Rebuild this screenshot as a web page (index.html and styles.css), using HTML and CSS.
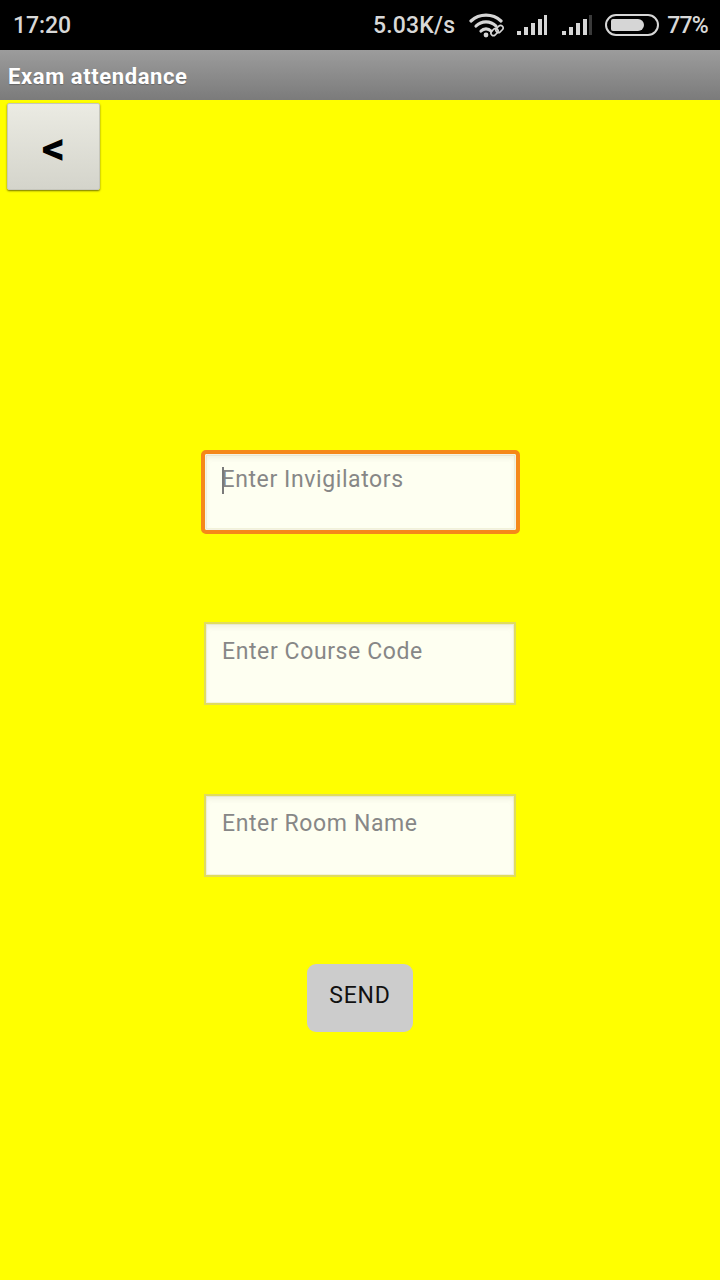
FILE: index.html
```html
<!DOCTYPE html>
<html>
<head>
<meta charset="utf-8">
<link rel="stylesheet" href="styles.css">
</head>
<body>
<div class="status">
  <span class="time">17:20</span>
  <div class="status-right">
    <span class="speed">5.03K/s</span>
    <svg class="wifi" width="36" height="26" viewBox="0 0 36 26">
      <path d="M2 9 A22 22 0 0 1 32 9" fill="none" stroke="#d6d6d6" stroke-width="3.2" stroke-linecap="round"/>
      <path d="M7 14 A14 14 0 0 1 27 14" fill="none" stroke="#d6d6d6" stroke-width="3.2" stroke-linecap="round"/>
      <path d="M12 19 A7 7 0 0 1 22 19" fill="none" stroke="#d6d6d6" stroke-width="3.2" stroke-linecap="round"/>
      <circle cx="17" cy="23" r="2.4" fill="#d6d6d6"/>
      <rect x="23" y="16" width="5" height="8" rx="2.5" transform="rotate(45 25.5 20)" fill="none" stroke="#d6d6d6" stroke-width="1.6"/>
      <rect x="28" y="13" width="5" height="8" rx="2.5" transform="rotate(45 30.5 17)" fill="none" stroke="#d6d6d6" stroke-width="1.6"/>
    </svg>
    <svg class="sig sig1" width="32" height="22" viewBox="0 0 32 22">
      <rect x="1" y="17" width="4" height="4" fill="#d6d6d6"/>
      <rect x="8" y="13" width="4" height="8" fill="#d6d6d6"/>
      <rect x="15" y="9" width="4" height="12" fill="#d6d6d6"/>
      <rect x="22" y="5" width="4" height="16" fill="#d6d6d6"/>
      <rect x="28" y="1" width="3" height="20" fill="#d6d6d6"/>
    </svg>
    <svg class="sig" width="32" height="22" viewBox="0 0 32 22">
      <rect x="1" y="17" width="4" height="4" fill="#d6d6d6"/>
      <rect x="8" y="13" width="4" height="8" fill="#d6d6d6"/>
      <rect x="15" y="9" width="4" height="12" fill="#d6d6d6"/>
      <rect x="22" y="5" width="4" height="16" fill="#d6d6d6"/>
      <rect x="28" y="1" width="3" height="20" fill="#3a3a3a"/>
    </svg>
    <div class="battery"><div class="battery-fill"></div></div>
    <span class="pct">77%</span>
  </div>
</div>
<div class="titlebar">Exam attendance</div>
<div class="content">
  <div class="back">&lt;</div>
  <div class="form">
    <div class="field focused"><span class="caret"></span><span class="ph">Enter Invigilators</span></div>
    <div class="field"><span class="ph">Enter Course Code</span></div>
    <div class="field"><span class="ph">Enter Room Name</span></div>
    <div class="send">SEND</div>
  </div>
</div>
</body>
</html>
```
FILE: styles.css
```css
html, body {
  margin: 0;
  padding: 0;
}
body {
  width: 720px;
  height: 1280px;
  background: #ffff00;
  font-family: Roboto, "Liberation Sans", sans-serif;
  overflow: hidden;
}
.status {
  height: 50px;
  background: #000;
  display: flex;
  align-items: center;
  justify-content: space-between;
  padding: 0 12px 0 13px;
  color: #d8d8d8;
  font-size: 23px;
  font-weight: 500;
}
.time {
  letter-spacing: -0.1px;
}
.status-right {
  display: flex;
  align-items: center;
}
.speed {
  margin-right: 14px;
  letter-spacing: 0.2px;
}
.wifi {
  margin-right: 11px;
}
.sig {
  margin-right: 12px;
}
.sig1 {
  margin-right: 13px;
}
.battery {
  height: 18px;
  border: 2px solid #d6d6d6;
  border-radius: 11px;
  margin-right: 8px;
  display: flex;
  align-items: center;
  padding: 0 4px;
  box-sizing: content-box;
  width: 42px;
}
.battery-fill {
  width: 33px;
  height: 12px;
  background: #d6d6d6;
  border-radius: 2px 6px 6px 2px;
}
.pct {
  letter-spacing: -0.8px;
}
.titlebar {
  height: 50px;
  background: linear-gradient(#9c9c9c, #7b7b7b);
  color: #fff;
  font-size: 22px;
  font-weight: 700;
  letter-spacing: 0.6px;
  display: flex;
  align-items: center;
  padding-left: 8px;
  padding-top: 2px;
  box-sizing: border-box;
  text-shadow: 0 1px 1px rgba(0,0,0,0.25);
}
.content {
  display: flex;
  flex-direction: column;
}
.back {
  margin: 3px 0 0 7px;
  width: 93px;
  height: 87px;
  box-sizing: border-box;
  background: linear-gradient(#ebebe3, #d4d4cb);
  border: 1px solid #c6c6bc;
  border-radius: 2px;
  box-shadow: 0 1px 2px rgba(0,0,0,0.55);
  display: flex;
  align-items: center;
  justify-content: center;
  font-size: 46px;
  font-weight: 700;
  color: #000;
  font-family: Roboto, "Liberation Sans", sans-serif;
  padding-top: 2px;
  line-height: 1;
}
.form {
  margin-top: 261px;
  display: flex;
  flex-direction: column;
  align-items: center;
}
.field {
  width: 312px;
  height: 83px;
  box-sizing: border-box;
  background: #fefff1;
  border: 2px solid #e0dc5e;
  box-shadow: inset 0 3px 5px rgba(120,120,80,0.10), inset 0 0 0 1px #f4f4dc;
  padding: 14px 0 0 16px;
  display: flex;
  align-items: flex-start;
  position: relative;
  margin-bottom: 89px;
}
.field.focused {
  border: 1px solid #f3f1e4;
  outline: 4px solid #f5881a;
  outline-offset: 0;
  border-radius: 1px;
  width: 311px;
  height: 76px;
  margin-top: 3px;
  margin-bottom: 92px;
  padding: 11px 0 0 16px;
}
.ph {
  font-size: 23px;
  color: #878787;
  line-height: 28px;
  letter-spacing: 0.6px;
}
.caret {
  position: absolute;
  left: 16px;
  top: 12px;
  width: 2px;
  height: 27px;
  background: #7a7a7a;
}
.send {
  margin-top: -2px;
  width: 106px;
  height: 68px;
  background: #cccccc;
  border-radius: 9px;
  display: flex;
  align-items: center;
  justify-content: center;
  font-size: 23px;
  letter-spacing: 0.8px;
  color: #111;
  padding-bottom: 6px;
  box-sizing: border-box;
}
```
